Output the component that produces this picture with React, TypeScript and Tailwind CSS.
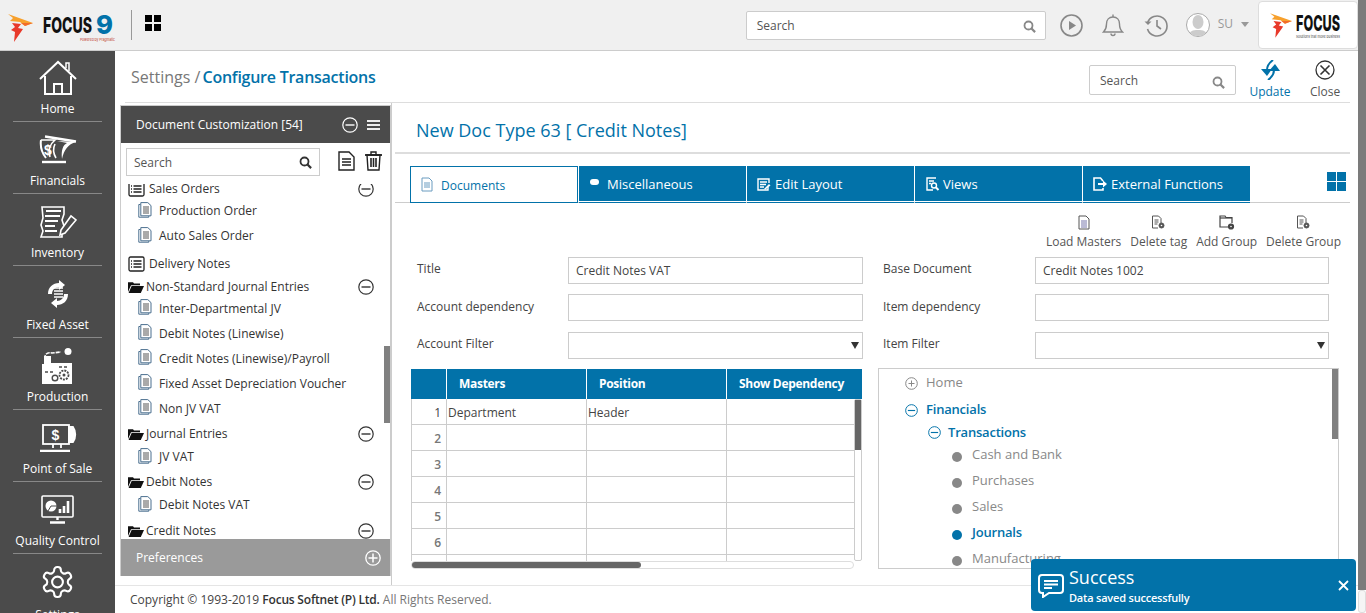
import React from 'react';

const BLUE = '#0272a9';

const Minus = ({ color = '#333', size = 16 }: { color?: string; size?: number }) => (
  <svg width={size} height={size} viewBox="0 0 16 16" fill="none" stroke={color} strokeWidth="1.2">
    <circle cx="8" cy="8" r="7.2" />
    <path d="M3.5 8h9" strokeWidth="1.4" />
  </svg>
);

const SearchIcon = ({ color = '#888' }: { color?: string }) => (
  <svg width="13" height="13" viewBox="0 0 13 13" fill="none" stroke={color} strokeWidth="1.8">
    <circle cx="5.5" cy="5.5" r="4" />
    <path d="M8.5 8.5l3.6 3.6" strokeWidth="2.2" />
  </svg>
);

const DocIcon = () => (
  <svg width="14" height="16" viewBox="0 0 14 16" fill="none" stroke="#4a6f8f" strokeWidth="1">
    <path d="M2.5 2.5H.8v12.7h10v-1.2" />
    <path d="M2.8.6h7l3.2 3v10.2H2.8z" fill="#fff" />
    <path d="M5 5h6M5 7h6M5 9h6M5 11h6" stroke="#555" />
  </svg>
);

const ListBox = () => (
  <svg width="17" height="16" viewBox="0 0 17 16" fill="none" stroke="#222" strokeWidth="1.3">
    <rect x="1" y="1" width="15" height="14" rx="1.5" />
    <path d="M5.5 5h8M5.5 8h8M5.5 11h8" />
    <path d="M3 5h1M3 8h1M3 11h1" strokeWidth="1.6" />
  </svg>
);

const Folder = () => (
  <svg width="16" height="12" viewBox="0 0 16 12" fill="#111">
    <path d="M0 1.2h5l1 1.3h6v1.7H3L0 11z" />
    <path d="M3.6 5H16l-3.2 7H.6z" />
  </svg>
);

const Logo = ({ w = 25, h = 28 }: { w?: number; h?: number }) => (
  <svg width={w} height={h} viewBox="0 0 25 28">
    <path d="M0 0l25 9-8 3-5-4-10-1 3-3z" fill="#f7a02c" />
    <path d="M4 9l9 1-3 4 5 1-9 13 1-10-4-2 4-3z" fill="#e8392a" />
    <path d="M13 9l12 0-8 3z" fill="#f26b2a" />
  </svg>
);

const navIcons: Record<string, React.ReactNode> = {
  Home: (
    <svg width="38" height="36" viewBox="0 0 38 36" fill="none" stroke="#fff" strokeWidth="2">
      <path d="M1 19L19 2l18 17" />
      <path d="M27 8V3h3v8" strokeWidth="1.5" />
      <path d="M6 16v18h9V24h8v10h9V16" />
      <path d="M12 34h14" />
    </svg>
  ),
  Financials: (
    <svg width="38" height="30" viewBox="0 0 38 30" fill="none" stroke="#fff" strokeWidth="2">
      <path d="M6 1.5l31 5" strokeWidth="2.4" />
      <path d="M2 5h14c-5 4-7 10-5 17" strokeWidth="1.6" />
      <path d="M2 5c-1 7 1 13 5 18" />
      <path d="M18 6l19 1c-8 2-12 8-14 17-1-9 1-14 5-16z" fill="#fff" stroke="none" />
      <path d="M16 9c-2 4-2 9 1 14" strokeWidth="1.6" />
      <path d="M3 27h24" strokeWidth="2.4" />
      <text x="5" y="20" fill="#fff" stroke="none" fontSize="14" fontWeight="700" fontFamily="Liberation Sans, sans-serif">$</text>
    </svg>
  ),
  Inventory: (
    <svg width="38" height="32" viewBox="0 0 38 32" fill="none" stroke="#fff" strokeWidth="1.6">
      <path d="M3 1h22v7l-2 6 2 6-2 6v5H2l2-6-2-6 2-7z" />
      <path d="M7 5h15M6 10h15M6 15h13M6 20h10M6 25h12" strokeWidth="2.2" />
      <path d="M22 24l10-14 5 4-11 13-5 2z" fill="#4b4b4b" />
    </svg>
  ),
  'Fixed Asset': (
    <svg width="24" height="30" viewBox="0 0 24 30" fill="none" stroke="#fff">
      <path d="M2 15C2 8 7 4 13 4V1l6 5-6 5V8c-4 0-7 3-7 7z" fill="#fff" stroke="none" />
      <path d="M22 15c0 7-5 11-11 11v3l-6-5 6-5v3c4 0 7-3 7-7z" fill="#fff" stroke="none" />
      <path d="M8 9h9M8 12h9M8 15h9M8 18h9" strokeWidth="1.5" />
    </svg>
  ),
  Production: (
    <svg width="31" height="36" viewBox="0 0 31 36" fill="none">
      <path d="M3 16V9c0-3 3-5 7-4l9-1" stroke="#fff" strokeWidth="1.6" strokeDasharray="4 1" />
      <circle cx="26" cy="3.5" r="3.5" fill="#fff" />
      <path d="M1 15h6v0l2 0v-7H2v8H0v20h30V15z" fill="#fff" />
      <circle cx="22" cy="27" r="4.5" fill="#fff" stroke="#4b4b4b" strokeWidth="1.8" strokeDasharray="2 1" />
      <circle cx="22" cy="27" r="1.5" fill="#4b4b4b" />
      <circle cx="13" cy="30" r="2.8" fill="#fff" stroke="#4b4b4b" strokeWidth="1.4" />
      <path d="M3 24h3M8 24h3M17 19h3M22 19h3" stroke="#4b4b4b" strokeWidth="1.5" />
    </svg>
  ),
  'Point of Sale': (
    <svg width="38" height="28" viewBox="0 0 38 28" fill="none" stroke="#fff" strokeWidth="1.8">
      <rect x="4" y="1" width="26" height="19" />
      <path d="M30 3h4c3 4 3 11 0 15h-4z" fill="#fff" />
      <path d="M14 20v4M22 20v4" />
      <path d="M1 27h30" strokeWidth="2.5" />
      <text x="12.5" y="16" fill="#fff" stroke="none" fontSize="14" fontWeight="700" fontFamily="Liberation Sans, sans-serif">$</text>
    </svg>
  ),
  'Quality Control': (
    <svg width="33" height="29" viewBox="0 0 33 29" fill="none" stroke="#fff" strokeWidth="1.6">
      <rect x="1" y="1" width="31" height="21" rx="1" />
      <circle cx="10" cy="11" r="5.5" fill="#fff" stroke="none" />
      <path d="M10 11h6M10 11l-3 5" stroke="#4b4b4b" strokeWidth="1" />
      <path d="M19 18v-4M23 18V11M27 18V6" strokeWidth="2.6" />
      <path d="M16.5 22v3M9 27.5h15" strokeWidth="2.4" />
    </svg>
  ),
  Settings: (
    <svg width="37" height="36" viewBox="0 0 24 24" fill="none" stroke="#fff" strokeWidth="1.4" strokeLinejoin="round">
      <path d="M12.22 2h-.44a2 2 0 0 0-2 2v.18a2 2 0 0 1-1 1.73l-.43.25a2 2 0 0 1-2 0l-.15-.08a2 2 0 0 0-2.73.73l-.22.38a2 2 0 0 0 .73 2.73l.15.1a2 2 0 0 1 1 1.72v.51a2 2 0 0 1-1 1.74l-.15.09a2 2 0 0 0-.73 2.73l.22.38a2 2 0 0 0 2.73.73l.15-.08a2 2 0 0 1 2 0l.43.25a2 2 0 0 1 1 1.73V20a2 2 0 0 0 2 2h.44a2 2 0 0 0 2-2v-.18a2 2 0 0 1 1-1.73l.43-.25a2 2 0 0 1 2 0l.15.08a2 2 0 0 0 2.73-.73l.22-.39a2 2 0 0 0-.73-2.73l-.15-.08a2 2 0 0 1-1-1.74v-.5a2 2 0 0 1 1-1.74l.15-.09a2 2 0 0 0 .73-2.73l-.22-.38a2 2 0 0 0-2.73-.73l-.15.08a2 2 0 0 1-2 0l-.43-.25a2 2 0 0 1-1-1.73V4a2 2 0 0 0-2-2z" />
      <circle cx="12" cy="12" r="3.6" />
    </svg>
  ),
};

const navItems = ['Home', 'Financials', 'Inventory', 'Fixed Asset', 'Production', 'Point of Sale', 'Quality Control'];

type Row = { label: string; h: number; kind: 'doc' | 'list' | 'folder'; minus?: boolean };

const rows: Row[] = [
  { label: 'Sales Orders', h: 20, kind: 'list', minus: true },
  { label: 'Production Order', h: 24, kind: 'doc' },
  { label: 'Auto Sales Order', h: 26, kind: 'doc' },
  { label: 'Delivery Notes', h: 29, kind: 'list' },
  { label: 'Non-Standard Journal Entries', h: 18, kind: 'folder', minus: true },
  { label: 'Inter-Departmental JV', h: 25, kind: 'doc' },
  { label: 'Debit Notes (Linewise)', h: 25, kind: 'doc' },
  { label: 'Credit Notes (Linewise)/Payroll', h: 25, kind: 'doc' },
  { label: 'Fixed Asset Depreciation Voucher', h: 25, kind: 'doc' },
  { label: 'Non JV VAT', h: 25, kind: 'doc' },
  { label: 'Journal Entries', h: 26, kind: 'folder', minus: true },
  { label: 'JV VAT', h: 20, kind: 'doc' },
  { label: 'Debit Notes', h: 30, kind: 'folder', minus: true },
  { label: 'Debit Notes VAT', h: 16, kind: 'doc' },
  { label: 'Credit Notes', h: 35, kind: 'folder', minus: true },
];

const tabs = [
  {
    label: 'Miscellaneous',
    icon: <span className="-mt-[4px] ml-[1px] block h-[6px] w-[9px] rounded-full bg-white" />,
  },
  {
    label: 'Edit Layout',
    icon: (
      <svg width="14" height="13" viewBox="0 0 14 13" fill="none" stroke="#fff" strokeWidth="1.4">
        <path d="M11 9v3H1V1h11v4" />
        <path d="M3 4h7M3 6.5h6M3 9h4" />
        <path d="M7 11l5-5 1.5 1.5-5 4z" fill="#fff" stroke="none" />
      </svg>
    ),
  },
  {
    label: 'Views',
    icon: (
      <svg width="15" height="14" viewBox="0 0 15 14" fill="none" stroke="#fff" strokeWidth="1.4">
        <path d="M11 1H2v12h6" />
        <path d="M4 4h5M4 6.5h2" />
        <circle cx="9" cy="8.5" r="2.5" />
        <path d="M11 10.5l2.5 2.5" strokeWidth="2" />
      </svg>
    ),
  },
  {
    label: 'External Functions',
    icon: (
      <svg width="14" height="14" viewBox="0 0 14 14" fill="none" stroke="#fff" strokeWidth="1.6">
        <path d="M10 4L7.5 1H1v12h9v-2" />
        <path d="M5 7h6" strokeWidth="2" />
        <path d="M10 3.5L14 7l-4 3.5z" fill="#fff" stroke="none" />
      </svg>
    ),
  },
];

const FileGear = () => (
  <svg width="15" height="15" viewBox="0 0 15 15" fill="none" stroke="#555" strokeWidth="1">
    <path d="M10 8V3.5L7.5 1H1.5v12H7" />
    <path d="M3.5 5h4M3.5 7h4M3.5 9h3" />
    <circle cx="10.5" cy="10.5" r="2.5" fill="#555" />
    <circle cx="10.5" cy="10.5" r="0.8" fill="#fff" stroke="none" />
  </svg>
);

const actions = [
  {
    label: 'Load Masters',
    icon: (
      <svg width="14" height="15" viewBox="0 0 14 15" fill="none" stroke="#555" strokeWidth="1">
        <path d="M2 1h7l3 3v10H2z" />
        <path d="M4 6h6M4 8h6M4 10h6M4 12h6" stroke="#77a" />
      </svg>
    ),
  },
  { label: 'Delete tag', icon: <FileGear /> },
  {
    label: 'Add Group',
    icon: (
      <svg width="16" height="15" viewBox="0 0 16 15" fill="none" stroke="#444" strokeWidth="1.2">
        <path d="M9 12H1V1h5l1 1.5h6V8" />
        <path d="M1 3h12" />
        <circle cx="12" cy="11.5" r="2.5" fill="#444" />
        <circle cx="12" cy="11.5" r="0.8" fill="#fff" stroke="none" />
      </svg>
    ),
  },
  { label: 'Delete Group', icon: <FileGear /> },
];

const Field = ({ value = '', select = false }: { value?: string; select?: boolean }) => (
  <div className={`flex h-[27px] items-center justify-between border border-[#ccc] bg-white px-[7px] text-[12px] text-[#444] ${select ? 'mt-[1px]' : ''}`}>
    <span>{value}</span>
    {select && <span className="-mr-[4px] h-0 w-0 border-x-[4px] border-t-[7px] border-x-transparent border-t-[#333]" />}
  </div>
);

const Label = ({ children, up = false }: { children: string; up?: boolean }) => (
  <div className={`text-[12px] text-[#444] ${up ? '-mt-[4px]' : '-mt-[2px]'}`}>{children}</div>
);

const Sub = ({ label, bold = false, dot }: { label: string; bold?: boolean; dot: string }) => (
  <div className="flex h-[26px] items-center pl-[73px]">
    <span className="mt-[3px] h-[10px] w-[10px] rounded-full" style={{ background: dot }} />
    <span className={`ml-[10px] -mt-[1px] text-[13px] ${bold ? 'font-semibold tracking-[-0.2px] text-[#0272a9]' : 'text-[#888]'}`}>{label}</span>
  </div>
);

export default function App() {
  return (
    <div className="flex h-[613px] w-[1366px] overflow-hidden bg-white font-['Open_Sans',sans-serif]">
      <div className="relative flex w-[1358px] flex-col">
        {/* top bar */}
        <header className="flex h-[51px] shrink-0 items-center border-b border-[#ccc] bg-[#f0f0f0]">
          <div className="ml-[8px] mt-[6px] w-[26px]">
            <Logo />
          </div>
          <svg width="74" height="38" viewBox="0 0 74 38" className="ml-[8px] mt-[4px] overflow-visible">
            <text x="1" y="25" fontSize="21" fontWeight="800" fill="#111" textLength="49" lengthAdjust="spacingAndGlyphs" fontFamily="Inter, sans-serif">FOCUS</text>
            <text x="54" y="26" fontSize="26" fontWeight="800" fill="#0272a9" textLength="17" lengthAdjust="spacingAndGlyphs" fontFamily="Inter, sans-serif">9</text>
            <text x="38" y="33" fontSize="4" fill="#c0392b" textLength="35" lengthAdjust="spacingAndGlyphs" fontFamily="Inter, sans-serif">Powered by Pragmatic</text>
          </svg>
          <div className="ml-[15px] h-[30px] w-px bg-[#999]" />
          <div className="ml-[13px] mb-[4px] grid grid-cols-2 gap-[2px]">
            <span className="h-[7px] w-[7px] bg-black" />
            <span className="h-[7px] w-[7px] bg-black" />
            <span className="h-[7px] w-[7px] bg-black" />
            <span className="h-[7px] w-[7px] bg-black" />
          </div>
          <div className="ml-auto flex h-[29px] w-[300px] items-center justify-between rounded-[2px] border border-[#ccc] bg-white pl-[10px] pr-[9px] pt-[2px] text-[12px] text-[#555]">
            <span>Search</span>
            <SearchIcon />
          </div>
          <svg width="23" height="23" viewBox="0 0 23 23" fill="none" stroke="#888" strokeWidth="1.6" className="ml-[14px] mt-[1px]">
            <circle cx="11.5" cy="11.5" r="10.5" />
            <path d="M9 7l7 4.5L9 16z" fill="#888" stroke="none" />
          </svg>
          <svg width="22" height="24" viewBox="0 0 22 24" fill="none" stroke="#888" strokeWidth="1.4" className="ml-[19px]">
            <path d="M1.5 19c2-2 3-4 3-8 0-4 2.5-7 6.5-7s6.5 3 6.5 7c0 4 1 6 3 8z" />
            <path d="M11 4V1.5M9 20.5a2 2 0 0 0 4 0" />
          </svg>
          <svg width="24" height="23" viewBox="0 0 24 23" fill="none" stroke="#888" strokeWidth="1.6" className="ml-[20px] mt-[1px]">
            <path d="M3.5 9a10 10 0 1 1 0 6" />
            <path d="M0.5 7.5l3.5 3.5 3.5-3.5z" fill="#888" stroke="none" />
            <path d="M13 6v6l4 3" />
          </svg>
          <div className="ml-[18px] flex h-[24px] w-[24px] items-end justify-center overflow-hidden rounded-full border border-[#aaa] bg-white">
            <svg width="20" height="22" viewBox="0 0 20 22" fill="#ccc">
              <ellipse cx="10" cy="8" rx="5.5" ry="7" />
              <path d="M0 22c1-5 5-6 10-6s9 1 10 6z" />
            </svg>
          </div>
          <span className="ml-[8px] -mt-[3px] text-[12px] text-[#999]">SU</span>
          <span className="ml-[8px] -mt-[2px] h-0 w-0 border-x-[4px] border-t-[5px] border-x-transparent border-t-[#999]" />
          <div className="ml-[9px] flex h-[48px] w-[100px] items-center rounded-[4px] border border-[#ddd] bg-white pl-[11px]">
            <Logo w={22} h={25} />
            <svg width="48" height="32" viewBox="0 0 48 32" className="ml-[3px] mt-[4px] overflow-visible">
              <text x="1" y="20" fontSize="22" fontWeight="800" fill="#111" textLength="44" lengthAdjust="spacingAndGlyphs" fontFamily="Inter, sans-serif">FOCUS</text>
              <text x="1" y="27" fontSize="4" fill="#444" textLength="44" lengthAdjust="spacingAndGlyphs" fontFamily="Inter, sans-serif">Solutions that move business</text>
            </svg>
          </div>
        </header>

        <div className="flex min-h-0 flex-1">
          {/* nav */}
          <nav className="w-[115px] shrink-0 overflow-hidden bg-[#4b4b4b] text-white">
            {navItems.map((n, i) => (
              <div
                key={n}
                className={`mx-auto flex w-[89px] flex-col items-center border-b border-[#888] ${i === 0 ? 'h-[71px]' : 'h-[72px]'}`}
              >
                <div className="flex min-h-0 flex-1 items-center justify-center pt-[6px]">{navIcons[n]}</div>
                <div className="mb-[2px] whitespace-nowrap text-[12px] leading-[20px]">{n}</div>
              </div>
            ))}
            <div className="flex flex-col items-center pt-[10px]">
              {navIcons.Settings}
              <div className="mt-[5px] text-[12px] leading-[20px]">Settings</div>
            </div>
          </nav>

          <main className="flex min-w-0 flex-1 flex-col">
            {/* title row */}
            <div className="ml-[10px] mr-[8px] flex h-[52px] shrink-0 items-center border-b border-[#ddd] pl-[6px]">
              <div className="text-[16px] text-[#777]">
                Settings / <span className="-ml-[2px] inline-block font-semibold tracking-[-0.25px] text-[#0272a9]">Configure Transactions</span>
              </div>
              <div className="ml-auto mt-[6px] flex h-[30px] w-[147px] items-center justify-between rounded-[2px] border border-[#ccc] bg-white pl-[10px] pr-[10px] pt-[2px] text-[12px] text-[#555]">
                <span>Search</span>
                <span className="mt-[4px]"><SearchIcon /></span>
              </div>
              <div className="ml-[14px] mt-[8px] flex w-[40px] flex-col items-center">
                <svg width="21" height="20" viewBox="0 0 21 20" fill="none" stroke={BLUE} strokeWidth="2">
                  <path d="M13 0C9 3 7 6 7 10" />
                  <path d="M1 9h11l-5 7z" fill={BLUE} stroke="none" />
                  <path d="M8 20c4-3 6-6 6-10" />
                  <path d="M9 11h11l-5-7z" fill={BLUE} stroke="none" />
                </svg>
                <span className="mt-[3px] text-[12px] text-[#0272a9]">Update</span>
              </div>
              <div className="ml-[20px] mr-[10px] mt-[8px] flex w-[30px] flex-col items-center">
                <svg width="20" height="20" viewBox="0 0 20 20" fill="none" stroke="#333" strokeWidth="1.3">
                  <circle cx="10" cy="10" r="9" />
                  <path d="M5.5 5.5l9 9M14.5 5.5l-9 9" strokeWidth="1.6" />
                </svg>
                <span className="mt-[3px] text-[12px] text-[#555]">Close</span>
              </div>
            </div>

            <div className="flex min-h-0 flex-1">
              {/* left panel */}
              <div className="ml-[5px] w-[272px] shrink-0 border-r border-[#ccc] pt-[2px]">
                <div className="flex h-[471px] w-[271px] flex-col border-x border-t border-[#ccc]">
                  <div className="flex h-[37px] shrink-0 items-center bg-[#4b4b4b] pl-[15px] pr-[10px] text-[12px] text-white">
                    <span>Document Customization [54]</span>
                    <span className="ml-auto -mr-[2px]"><Minus color="#fff" /></span>
                    <span className="ml-[11px] flex w-[13px] flex-col gap-[2px]">
                      <span className="h-[2px] bg-[#eee]" />
                      <span className="h-[2px] bg-[#eee]" />
                      <span className="h-[2px] bg-[#eee]" />
                    </span>
                  </div>
                  <div className="flex h-[41px] shrink-0 items-start pl-[5px] pt-[5px]">
                    <div className="flex h-[28px] w-[194px] items-center justify-between border border-[#ccc] pl-[7px] pr-[7px] pt-[1px] text-[12px] text-[#555]">
                      <span>Search</span>
                      <SearchIcon color="#333" />
                    </div>
                    <svg width="17" height="20" viewBox="0 0 17 20" fill="none" stroke="#222" strokeWidth="1.4" className="ml-[18px] mt-[3px]">
                      <path d="M1 1h10l5 5v13H1z" />
                      <path d="M4 8h9M4 11h9M4 14h9" />
                    </svg>
                    <svg width="17" height="20" viewBox="0 0 17 20" fill="none" stroke="#222" strokeWidth="1.4" className="ml-[10px] mt-[3px]">
                      <path d="M0 4h17" strokeWidth="1.8" />
                      <path d="M6 4V1h5v3" />
                      <path d="M2 4l1 15h11l1-15z" />
                      <path d="M6 7v9M8.5 7v9M11 7v9" strokeWidth="1.6" />
                    </svg>
                  </div>
                  <div className="relative min-h-0 flex-1 overflow-hidden">
                    <div className="-mt-[5px]">
                      {rows.map((r) => (
                        <div key={r.label} className="flex items-center text-[12px] text-[#333]" style={{ height: r.h }}>
                          {r.kind === 'doc' && (
                            <>
                              <span className="ml-[17px] -mt-[3px] w-[21px]"><DocIcon /></span>
                              <span>{r.label}</span>
                            </>
                          )}
                          {r.kind === 'list' && (
                            <>
                              <span className="ml-[7px] w-[21px]"><ListBox /></span>
                              <span>{r.label}</span>
                            </>
                          )}
                          {r.kind === 'folder' && (
                            <>
                              <span className="ml-[7px] w-[18px]"><Folder /></span>
                              <span>{r.label}</span>
                            </>
                          )}
                          {r.minus && <span className="ml-auto mr-[16px]"><Minus /></span>}
                        </div>
                      ))}
                    </div>
                    <div className="absolute right-0 top-[162px] h-[77px] w-[6px] bg-[#808080]" />
                  </div>
                  <div className="flex h-[37px] shrink-0 items-center justify-between bg-[#9a9a9a] pl-[15px] pr-[9px] text-[12px] text-white">
                    <span>Preferences</span>
                    <svg width="16" height="16" viewBox="0 0 16 16" fill="none" stroke="#fff" strokeWidth="1.3">
                      <circle cx="8" cy="8" r="7.2" />
                      <path d="M8 3.5v9M3.5 8h9" strokeWidth="1.5" />
                    </svg>
                  </div>
                </div>
              </div>

              {/* right pane */}
              <div className="mr-[8px] min-w-0 flex-1 pl-[3px]">
                <div className="flex h-[51px] items-center border-b-2 border-[#ddd] pl-[21px] pt-[5px] text-[18px] text-[#0272a9]">
                  New Doc Type 63 [ Credit Notes]
                </div>
                <div className="flex h-[49px] items-start border-b border-[#ccc] pl-[15px] pt-[12px]">
                  <div className="flex h-[37px] w-[168px] items-center border border-[#0272a9] bg-white pl-[10px] text-[12px] text-[#0272a9]">
                    <svg width="12" height="15" viewBox="0 0 12 15" fill="none" stroke="#6a9cc0" strokeWidth="1">
                      <path d="M1 1h7l3 3v10H1z" />
                      <path d="M3 6h6M3 8h6M3 10h6" />
                    </svg>
                    <span className="ml-[8px] mt-[2px]">Documents</span>
                  </div>
                  {tabs.map((t) => (
                    <div key={t.label} className="ml-[1px] flex h-[37px] w-[167px] items-center border-b border-[#0272a9] bg-[#0272a9] pl-[10px] text-[13px] text-white shadow-[inset_0_-1px_0_#fff]">
                      <span className="flex w-[18px] items-center">{t.icon}</span>
                      <span className="mt-[1px]">{t.label}</span>
                    </div>
                  ))}
                  <div className="ml-auto mr-[4px] mt-[6px] grid grid-cols-2 gap-[1px]">
                    <span className="h-[9px] w-[9px] bg-[#0272a9]" />
                    <span className="h-[9px] w-[9px] bg-[#0272a9]" />
                    <span className="h-[9px] w-[9px] bg-[#0272a9]" />
                    <span className="h-[9px] w-[9px] bg-[#0272a9]" />
                  </div>
                </div>
                <div className="flex h-[54px] justify-end gap-[9px] pr-[9px] pt-[11px]">
                  {actions.map((a) => (
                    <div key={a.label} className="flex flex-col items-center text-[12px] text-[#555]">
                      <span className="flex h-[16px] items-center">{a.icon}</span>
                      <span className="mt-[2px] leading-[20px]">{a.label}</span>
                    </div>
                  ))}
                </div>

                <div className="grid grid-cols-[151px_295px_20px_152px_294px] items-center gap-y-[10px] pl-[22px]">
                  <Label up>Title</Label>
                  <Field value="Credit Notes VAT" />
                  <span />
                  <Label up>Base Document</Label>
                  <Field value="Credit Notes 1002" />
                  <Label>Account dependency</Label>
                  <Field />
                  <span />
                  <Label>Item dependency</Label>
                  <Field />
                  <Label>Account Filter</Label>
                  <Field select />
                  <span />
                  <Label>Item Filter</Label>
                  <Field select />
                </div>

                <div className="mt-[10px] flex items-start pl-[16px]">
                  {/* masters table */}
                  <div className="relative h-[200px] w-[451px] overflow-hidden">
                    <div className="grid h-[30px] grid-cols-[36px_140px_140px_126px] bg-[#0272a9] text-[12px] font-bold tracking-[-0.3px] text-white">
                      <span className="border-r border-white" />
                      <span className="flex items-center border-r border-white pl-[12px]">Masters</span>
                      <span className="flex items-center border-r border-white pl-[12px]">Position</span>
                      <span className="flex items-center pl-[12px]">Show Dependency</span>
                    </div>
                    <div className="h-[162px] overflow-hidden border-l border-[#ccc] pr-[8px]">
                      {[1, 2, 3, 4, 5, 6, 7].map((n) => (
                        <div key={n} className="grid h-[26px] grid-cols-[35px_140px_140px_127px] border-b border-[#ccc] text-[12px] text-[#444]">
                          <span className={`flex items-center justify-end border-r border-[#ccc] pr-[5px] pt-[2px] ${n === 1 ? '' : 'font-semibold text-[#777]'}`}>{n}</span>
                          <span className="flex items-center border-r border-[#ccc] pl-[1px] pt-[2px]">{n === 1 ? 'Department' : ''}</span>
                          <span className="flex items-center border-r border-[#ccc] pl-[1px] pt-[2px]">{n === 1 ? 'Header' : ''}</span>
                          <span />
                        </div>
                      ))}
                    </div>
                    <div className="absolute right-0 top-[30px] h-[162px] w-[8px] rounded-[2px] border border-[#ccc] bg-white">
                      <div className="h-[50px] bg-[#666]" />
                    </div>
                    <div className="h-[8px] w-[443px] rounded-[4px] border border-[#ddd] bg-white">
                      <div className="h-full w-[229px] rounded-[4px] bg-[#666]" />
                    </div>
                  </div>

                  {/* menu tree */}
                  <div className="relative -mt-[1px] ml-[16px] h-[201px] w-[461px] overflow-hidden border border-[#ccc] bg-white">
                    <div className="flex h-[26px] items-center pl-[26px] pt-[2px] text-[13px] text-[#888]">
                      <svg width="13" height="13" viewBox="0 0 13 13" fill="none" stroke="#888">
                        <circle cx="6.5" cy="6.5" r="5.8" />
                        <path d="M3.5 6.5h6M6.5 3.5v6" />
                      </svg>
                      <span className="ml-[8px]">Home</span>
                    </div>
                    <div className="mt-[2px] flex h-[26px] items-center pl-[26px] text-[13px] font-semibold tracking-[-0.2px] text-[#0272a9]">
                      <Minus color="#0272a9" size={13} />
                      <span className="ml-[8px]">Financials</span>
                    </div>
                    <div className="-mt-[3px] flex h-[26px] items-center pl-[49px] text-[13px] font-semibold tracking-[-0.2px] text-[#0272a9]">
                      <span className="-mt-[2px]"><Minus color="#0272a9" size={13} /></span>
                      <span className="ml-[7px]">Transactions</span>
                    </div>
                    <div className="-mt-[4px]">
                      <Sub label="Cash and Bank" dot="#888" />
                      <Sub label="Purchases" dot="#888" />
                      <Sub label="Sales" dot="#888" />
                      <Sub label="Journals" dot="#0272a9" bold />
                      <Sub label="Manufacturing" dot="#888" />
                    </div>
                    <div className="absolute right-0 top-0 h-[70px] w-[6px] bg-[#808080]" />
                  </div>
                </div>
              </div>
            </div>

            {/* footer */}
            <div className="flex h-[28px] shrink-0 items-center border-t border-[#e5e5e5] pl-[15px] text-[12px] text-[#777]">
              <span className="text-[#444]">Copyright © 1993-2019&nbsp;</span>
              <span className="font-semibold tracking-[-0.2px] text-[#333]">Focus Softnet (P) Ltd.</span>
              <span>&nbsp;All Rights Reserved.</span>
            </div>
          </main>
        </div>

        {/* toast */}
        <div className="absolute left-[1031px] top-[559px] flex h-[52px] w-[325px] items-center rounded-[4px] bg-[#0272a9] text-white">
          <svg width="26" height="24" viewBox="0 0 26 24" fill="none" stroke="#fff" strokeWidth="2" className="ml-[7px] mt-[2px]">
            <path d="M4 1h18a3 3 0 0 1 3 3v12a3 3 0 0 1-3 3H11l-6 4v-4H4a3 3 0 0 1-3-3V4a3 3 0 0 1 3-3z" />
            <path d="M6 7h14M6 10.5h14M6 14h8" />
          </svg>
          <div className="ml-[5px] pt-[3px]">
            <div className="text-[18px] leading-[22px]">Success</div>
            <div className="mt-[1px] text-[11px] font-semibold leading-[18px] tracking-[-0.2px]">Data saved successfully</div>
          </div>
          <svg width="11" height="11" viewBox="0 0 11 11" stroke="#fff" strokeWidth="1.8" className="ml-auto mr-[7px]">
            <path d="M1 1l9 9M10 1l-9 9" />
          </svg>
        </div>
      </div>

      {/* page scrollbar */}
      <div className="flex w-[8px] shrink-0 flex-col">
        <div className="h-[590px] bg-[#7b7b7b]" />
        <div className="flex-1 rounded-[3px] border border-[#ddd] bg-[#f5f5f5]" />
      </div>
    </div>
  );
}
